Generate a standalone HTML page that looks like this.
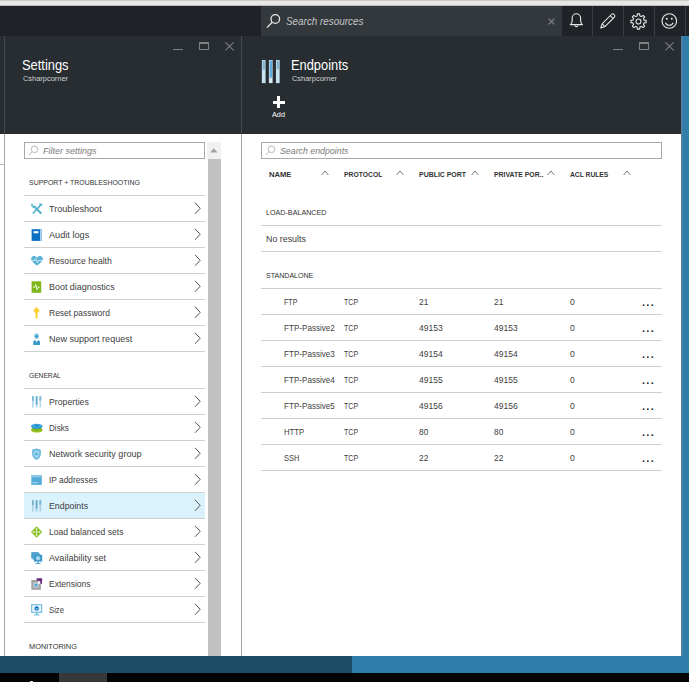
<!DOCTYPE html>
<html lang="en">
<head>
<meta charset="utf-8">
<title>Endpoints - Microsoft Azure</title>
<style>
*{box-sizing:border-box;margin:0;padding:0}
html,body{width:689px;height:682px;overflow:hidden;background:#2e7dab}
body{position:relative;font-family:"Liberation Sans",sans-serif;color:#3b3b3b;font-size:9px}
.abs,.t,svg.i{position:absolute}
.t{white-space:nowrap;line-height:1;display:block;transform-origin:0 0}
#strip{left:0;top:0;width:689px;height:6px;background:#e7e7e7;border-top:1px solid #c9c9c9;border-bottom:1px solid #bdbdbd}
#topbar{left:0;top:6px;width:689px;height:30px;background:#1f2327}
#tsearch{left:261px;top:6px;width:301px;height:30px;background:#33383c}
.tsep{top:6px;width:1px;height:30px;background:#3a3f43}
.bh{top:36px;height:98px;background:#282d31}
.bb{top:134px;height:522px;background:#fff}
.row{left:24px;width:181px;height:26px;border-top:1px solid #cfcfcf}
.row svg.c{position:absolute;left:170px;top:6px}
.row svg.i{left:6px;top:6px}
.sel{background:#daf2fc}
.ln{left:261px;width:401px;height:1px;background:#cfcfcf}
</style>
</head>
<body>

<div id="strip" class="abs"></div>
<div id="topbar" class="abs"></div>
<div id="tsearch" class="abs"></div>
<svg class="i" style="left:265px;top:12px" width="18" height="18" viewBox="0 0 18 18" fill="none" stroke="#e8e8e8" stroke-width="1.300"><circle cx="10.300" cy="7" r="4.300"/><path d="M7.200 10.200 L2 15.600"/></svg>
<span class="t" style="left:286px;top:16px;font-size:11px;transform:scaleX(0.899);color:#c4c6c7;font-style:italic;">Search resources</span>
<svg class="i" style="left:547.500px;top:18px" width="7" height="7" viewBox="0 0 7 7" stroke="#85888b" stroke-width="1.100"><path d="M.6.600L6.400 6.400M6.400.6L.6 6.400"/></svg>
<div class="abs" style="left:562px;top:6px;width:127px;height:30px;background:#1f2327"></div>
<div class="abs tsep" style="left:592px"></div><div class="abs tsep" style="left:623px"></div><div class="abs tsep" style="left:654px"></div><div class="abs tsep" style="left:685px"></div>
<svg class="i" style="left:568px;top:12px" width="17" height="18" viewBox="0 0 17 18" fill="none" stroke="#e9e9e9" stroke-width="1.100" stroke-linejoin="round"><path d="M2.300 12.600C3.900 11.600 4.200 10.600 4.200 8.500V6a4.200 4.200 0 0 1 8.400 0V8.500C12.600 10.600 12.900 11.600 14.500 12.600Z"/><path d="M6.700 13.300a1.750 1.750 0 0 0 3.400 0"/></svg>
<svg class="i" style="left:599px;top:12px" width="18" height="18" viewBox="0 0 18 18" fill="none" stroke="#e9e9e9" stroke-width="1.050" stroke-linejoin="round"><path d="M1.800 16L3.100 11.800L12.400 2.500a1.900 1.900 0 0 1 2.800 2.800L5.900 14.600Z"/><path d="M3.100 11.800L5.900 14.600M11.200 3.700L14 6.500"/></svg>
<svg class="i" style="left:629px;top:11.800px" width="19" height="19" viewBox="0 0 19 19" fill="none" stroke="#e9e9e9" stroke-width="1.050" stroke-linejoin="round"><path d="M8.12 3.970L8.360 1.880L10.640 1.880L10.880 3.970L12.440 4.610L14.080 3.310L15.690 4.920L14.390 6.560L15.030 8.120L17.120 8.360L17.120 10.640L15.030 10.880L14.390 12.440L15.690 14.080L14.080 15.690L12.440 14.390L10.880 15.030L10.640 17.120L8.360 17.120L8.120 15.030L6.560 14.390L4.920 15.690L3.310 14.080L4.610 12.440L3.970 10.880L1.880 10.640L1.880 8.360L3.970 8.120L4.610 6.560L3.310 4.920L4.920 3.310L6.560 4.610Z"/><circle cx="9.500" cy="9.500" r="2.500"/></svg>
<svg class="i" style="left:660px;top:12px" width="18" height="18" viewBox="0 0 18 18" fill="none" stroke="#e9e9e9" stroke-width="1.100"><circle cx="9.300" cy="9" r="7.300"/><path d="M5.500 10.700a4.100 4.100 0 0 0 7.600 0"/><circle cx="6.800" cy="6.800" r=".95" fill="#e9e9e9" stroke="none"/><circle cx="11.800" cy="6.800" r=".95" fill="#e9e9e9" stroke="none"/></svg>

<div class="abs" style="left:0;top:36px;width:5px;height:98px;background:#282d31;border-right:1px solid #454a4e"></div>
<div class="abs" style="left:0;top:134px;width:5px;height:522px;background:#fff;border-right:1px solid #a8a8a8"></div>
<div class="abs" style="left:0;top:164px;width:4px;height:1px;background:#b5b5b5"></div>
<div class="abs bh" style="left:5px;width:236px"></div>
<div class="abs bb" style="left:5px;width:236px"></div>
<div class="abs" style="left:241px;top:36px;width:1px;height:98px;background:#44494d"></div>
<div class="abs" style="left:241px;top:134px;width:1px;height:522px;background:#a6a6a6"></div>
<span class="t" style="left:22.3px;top:58px;font-size:14px;transform:scaleX(0.919);color:#fff;">Settings</span><span class="t" style="left:22.5px;top:75px;font-size:7.6px;transform:scaleX(0.978);color:#d2d4d5;">Csharpcorner</span><div class="abs" style="left:173px;top:49px;width:10px;height:1.200px;background:#7d8184"></div>
<div class="abs" style="left:199px;top:42px;width:10.200px;height:8.300px;border:1.100px solid #7d8184;border-top-width:2.500px"></div>
<svg class="i" style="left:225px;top:42px" width="9" height="9" viewBox="0 0 9 9" stroke="#7d8184" stroke-width="1.050"><path d="M.4.400L8.600 8.300M8.600.4L.4 8.300"/></svg>

<div class="abs bh" style="left:242px;width:439px"></div>
<div class="abs bb" style="left:242px;width:439px"></div><div class="abs" style="left:681px;top:36px;width:1.500px;height:620px;background:#4b80a0"></div>
<svg class="i" style="left:261.400px;top:59.900px" width="20" height="24" viewBox="0 0 20 24">
<g><rect x="0.85" y="0" width="3.700" height="23.100" fill="#cfe5f1"/><rect x="1.55" y=".6" width="2.300" height="8.8" fill="#7fb4d3"/><rect x="0.85" y="9.40" width="3.700" height=".7" fill="#8fb9d0"/><rect x="1.55" y="10.10" width="2.300" height="12.40" fill="#c6e3f2"/></g>
<g><rect x="7.90" y="0" width="3.700" height="23.100" fill="#cfe5f1"/><rect x="8.60" y=".6" width="2.300" height="17" fill="#5aa9d8"/><rect x="7.90" y="17.60" width="3.700" height=".7" fill="#8fb9d0"/><rect x="8.60" y="18.30" width="2.300" height="4.20" fill="#d5eaf5"/></g>
<g><rect x="14.95" y="0" width="3.700" height="23.100" fill="#cfe5f1"/><rect x="15.65" y=".6" width="2.300" height="8.3" fill="#7fb4d3"/><rect x="14.95" y="8.90" width="3.700" height=".7" fill="#8fb9d0"/><rect x="15.65" y="9.60" width="2.300" height="12.90" fill="#c6e3f2"/></g>
</svg>
<span class="t" style="left:291.3px;top:58px;font-size:14px;transform:scaleX(0.918);color:#fff;">Endpoints</span><span class="t" style="left:291.5px;top:75px;font-size:7.6px;transform:scaleX(0.978);color:#d2d4d5;">Csharpcorner</span>
<div class="abs" style="left:272.500px;top:100.500px;width:12.500px;height:3px;background:#fff"></div>
<div class="abs" style="left:277.300px;top:96px;width:3px;height:12.300px;background:#fff"></div>
<span class="t" style="left:272px;top:111.3px;font-size:8px;transform:scaleX(0.913);color:#fff;">Add</span><div class="abs" style="left:613px;top:49px;width:10px;height:1.200px;background:#7d8184"></div>
<div class="abs" style="left:639px;top:42px;width:10.200px;height:8.300px;border:1.100px solid #7d8184;border-top-width:2.500px"></div>
<svg class="i" style="left:665px;top:42px" width="9" height="9" viewBox="0 0 9 9" stroke="#7d8184" stroke-width="1.050"><path d="M.4.400L8.600 8.300M8.600.4L.4 8.300"/></svg>

<div class="abs" style="left:24px;top:142px;width:181px;height:17px;border:1px solid #a9a9a9;background:#fff"></div>
<svg class="i" style="left:28px;top:145px" width="11" height="11" viewBox="0 0 11 11" fill="none" stroke="#b9b9b9" stroke-width="1"><circle cx="6.500" cy="4.300" r="3.300"/><path d="M4.200 6.700L1 10"/></svg>
<span class="t" style="left:42.8px;top:146.3px;font-size:9.5px;transform:scaleX(0.945);color:#7a7a7a;font-style:italic;">Filter settings</span>
<div class="abs" style="left:207px;top:142px;width:14px;height:17px;background:#f1f1f1"></div>
<div class="abs" style="left:207.500px;top:159px;width:13.700px;height:497px;background:#c1c1c1"></div>
<svg class="i" style="left:210px;top:147.800px" width="8" height="5" viewBox="0 0 8 5"><path d="M0 4.500L3.800 .3L7.600 4.500Z" fill="#a3a3a3"/></svg>
<span class="t" style="left:29px;top:178.8px;font-size:8px;transform:scaleX(0.867);color:#333;">SUPPORT + TROUBLESHOOTING</span><div class="abs row" style="top:195px"><svg class="i" width="14" height="14" viewBox="0 0 14 14" fill="none" stroke="#5ab3cf" stroke-linecap="round"><path d="M4.200 4.400L10.700 11" stroke-width="2.200"/><path d="M10.800 2.900L3.400 11" stroke-width="1.700"/><path d="M2 2.200a2.300 2.300 0 0 0 3.200 2.800" stroke-width="1.500"/><path d="M9.900 2.100l1.800 .7" stroke-width="1.600"/></svg><svg class="c" width="8" height="13" viewBox="0 0 8 13" fill="none" stroke="#555" stroke-width="1"><path d="M1 .8L6.200 6.300L1 11.800"/></svg></div><span class="t" style="left:49.4px;top:204.0px;font-size:9.5px;transform:scaleX(0.956);color:#404040;">Troubleshoot</span>
<div class="abs row" style="top:221px"><svg class="i" width="14" height="14" viewBox="0 0 14 14"><rect x="1.600" y="1.200" width="10" height="11.700" fill="#0e70c5"/><rect x="10" y="1.200" width="1.700" height="11.700" fill="#a5d0f2"/><rect x="3.600" y="3.200" width="4.800" height="2.100" fill="#fff"/></svg><svg class="c" width="8" height="13" viewBox="0 0 8 13" fill="none" stroke="#555" stroke-width="1"><path d="M1 .8L6.200 6.300L1 11.800"/></svg></div><span class="t" style="left:49.4px;top:230.0px;font-size:9.5px;transform:scaleX(0.966);color:#404040;">Audit logs</span>
<div class="abs row" style="top:247px"><svg class="i" width="14" height="14" viewBox="0 0 14 14"><path d="M7 11.600C1.500 7.500 .8 5.400 1.300 3.900C2.200 1.500 5.600 1.400 7 3.700C8.400 1.400 11.800 1.500 12.700 3.900C13.200 5.400 12.500 7.500 7 11.600Z" fill="#5ab3d6"/><path d="M2 6.500h2.800l1-2 1.600 4.300 1-2.300h3.400" stroke="#e8f5fb" stroke-width=".8" fill="none"/></svg><svg class="c" width="8" height="13" viewBox="0 0 8 13" fill="none" stroke="#555" stroke-width="1"><path d="M1 .8L6.200 6.300L1 11.800"/></svg></div><span class="t" style="left:49.4px;top:256.0px;font-size:9.5px;transform:scaleX(0.908);color:#404040;">Resource health</span>
<div class="abs row" style="top:273px"><svg class="i" width="14" height="14" viewBox="0 0 14 14"><rect x="1.600" y="1.300" width="9.600" height="11.500" fill="#7db51a"/><path d="M3 7.200h1.800l1-2.600 1.300 5 1-2.400h1.700" stroke="#fff" stroke-width=".9" fill="none"/></svg><svg class="c" width="8" height="13" viewBox="0 0 8 13" fill="none" stroke="#555" stroke-width="1"><path d="M1 .8L6.200 6.300L1 11.800"/></svg></div><span class="t" style="left:49.4px;top:282.0px;font-size:9.5px;transform:scaleX(0.941);color:#404040;">Boot diagnostics</span>
<div class="abs row" style="top:299px"><svg class="i" width="14" height="14" viewBox="0 0 14 14"><path d="M6.500 1L9.800 4.500L7.500 7v5l-1 .8l-1-.8V7L3.200 4.500Z" fill="#fbd02c"/></svg><svg class="c" width="8" height="13" viewBox="0 0 8 13" fill="none" stroke="#555" stroke-width="1"><path d="M1 .8L6.200 6.300L1 11.800"/></svg></div><span class="t" style="left:49.4px;top:308.0px;font-size:9.5px;transform:scaleX(0.894);color:#404040;">Reset password</span>
<div class="abs row" style="top:325px"><svg class="i" width="14" height="14" viewBox="0 0 14 14"><path d="M3.200 13V9.200l2.300-1.200h2.200l2.300 1.200V13Z" fill="#3d9bc9"/><rect x="4.200" y="1.200" width="4.800" height="5.800" rx="2.200" fill="#8fd0ea"/><circle cx="6.600" cy="4.300" r="1.400" fill="#3d9bc9"/><path d="M5.200 8l1.400 2.200L8 8Z" fill="#fff"/></svg><svg class="c" width="8" height="13" viewBox="0 0 8 13" fill="none" stroke="#555" stroke-width="1"><path d="M1 .8L6.200 6.300L1 11.800"/></svg></div><span class="t" style="left:49.4px;top:334.0px;font-size:9.5px;transform:scaleX(0.949);color:#404040;">New support request</span>
<div class="abs row" style="top:351px;height:1px"></div>
<span class="t" style="left:29px;top:371.8px;font-size:8px;transform:scaleX(0.832);color:#333;">GENERAL</span><div class="abs row" style="top:388px"><svg class="i" width="14" height="14" viewBox="0 0 14 14"><rect x="2" y="1.200" width="1.800" height="11.400" fill="#b9dbec"/><rect x="2" y="1.200" width="1.800" height="5" fill="#79b9db"/><rect x="5.700" y="1.200" width="1.800" height="11.400" fill="#b9dbec"/><rect x="5.700" y="1.200" width="1.800" height="8.500" fill="#66afd7"/><rect x="9.400" y="1.200" width="1.800" height="11.400" fill="#b9dbec"/><rect x="9.400" y="1.200" width="1.800" height="4.500" fill="#79b9db"/></svg><svg class="c" width="8" height="13" viewBox="0 0 8 13" fill="none" stroke="#555" stroke-width="1"><path d="M1 .8L6.200 6.300L1 11.800"/></svg></div><span class="t" style="left:49.4px;top:397.0px;font-size:9.5px;transform:scaleX(0.919);color:#404040;">Properties</span>
<div class="abs row" style="top:414px"><svg class="i" width="14" height="14" viewBox="0 0 14 14"><ellipse cx="6.800" cy="9.200" rx="5.600" ry="2.400" fill="#a5c626"/><ellipse cx="6.800" cy="8.500" rx="5.600" ry="2.100" fill="#86b81b"/><ellipse cx="6.800" cy="5.600" rx="5.600" ry="2.500" fill="#2c8fcf"/><ellipse cx="6.800" cy="4.900" rx="5.600" ry="2.100" fill="#3aa8df"/><ellipse cx="6.800" cy="4.700" rx="1.600" ry=".6" fill="#1d6fa8"/></svg><svg class="c" width="8" height="13" viewBox="0 0 8 13" fill="none" stroke="#555" stroke-width="1"><path d="M1 .8L6.200 6.300L1 11.800"/></svg></div><span class="t" style="left:49.4px;top:423.0px;font-size:9.5px;transform:scaleX(0.856);color:#404040;">Disks</span>
<div class="abs row" style="top:440px"><svg class="i" width="14" height="14" viewBox="0 0 14 14"><path d="M6.500 1.600L10.800 2.800V7.300C10.800 9.900 8.700 11.900 6.500 13C4.300 11.900 2.200 9.900 2.200 7.300V2.800Z" fill="#5fb3dc"/><path d="M6.500 3.100L9.500 4V7.200C9.500 9.100 8 10.500 6.500 11.400C5 10.500 3.500 9.100 3.500 7.200V4Z" fill="#9fd3ec"/><circle cx="6.500" cy="7" r="1.500" fill="#5fb3dc"/></svg><svg class="c" width="8" height="13" viewBox="0 0 8 13" fill="none" stroke="#555" stroke-width="1"><path d="M1 .8L6.200 6.300L1 11.800"/></svg></div><span class="t" style="left:49.4px;top:449.0px;font-size:9.5px;transform:scaleX(0.952);color:#404040;">Network security group</span>
<div class="abs row" style="top:466px"><svg class="i" width="14" height="14" viewBox="0 0 14 14"><rect x="1.300" y="2.200" width="10.500" height="9.700" fill="#55acd8"/><rect x="1.300" y="2.200" width="10.500" height="2" fill="#8fcbe8"/><rect x="2.600" y="9.100" width="1.100" height="1.100" fill="#d9eef8"/><rect x="4.600" y="9.100" width="1.100" height="1.100" fill="#d9eef8"/><rect x="6.600" y="9.100" width="1.100" height="1.100" fill="#d9eef8"/></svg><svg class="c" width="8" height="13" viewBox="0 0 8 13" fill="none" stroke="#555" stroke-width="1"><path d="M1 .8L6.200 6.300L1 11.800"/></svg></div><span class="t" style="left:49.4px;top:475.0px;font-size:9.5px;transform:scaleX(0.877);color:#404040;">IP addresses</span>
<div class="abs row sel" style="top:492px"><svg class="i" width="14" height="14" viewBox="0 0 14 14"><rect x="2" y="1.200" width="1.800" height="11.400" fill="#b0d3e4"/><rect x="2" y="1.200" width="1.800" height="5" fill="#79b3d3"/><rect x="5.700" y="1.200" width="1.800" height="11.400" fill="#b0d3e4"/><rect x="5.700" y="1.200" width="1.800" height="8.500" fill="#6aa9cf"/><rect x="9.400" y="1.200" width="1.800" height="11.400" fill="#b0d3e4"/><rect x="9.400" y="1.200" width="1.800" height="4.500" fill="#79b3d3"/></svg><svg class="c" width="8" height="13" viewBox="0 0 8 13" fill="none" stroke="#555" stroke-width="1"><path d="M1 .8L6.200 6.300L1 11.800"/></svg></div><span class="t" style="left:49.4px;top:501.0px;font-size:9.5px;transform:scaleX(0.925);color:#404040;">Endpoints</span>
<div class="abs row" style="top:518px"><svg class="i" width="14" height="14" viewBox="0 0 14 14"><path d="M6.600 1.200L12.200 7L6.600 12.800L1 7Z" fill="#80bb1e"/><path d="M6.600 3.200v7.600M2.900 7h7.400" stroke="#d8ebb0" stroke-width="1.100"/><path d="M6.600 2.600l1.500 1.700h-3ZM6.600 11.400l1.500-1.700h-3ZM2.300 7l1.700-1.500v3ZM10.900 7l-1.700-1.500v3Z" fill="#d8ebb0"/></svg><svg class="c" width="8" height="13" viewBox="0 0 8 13" fill="none" stroke="#555" stroke-width="1"><path d="M1 .8L6.200 6.300L1 11.800"/></svg></div><span class="t" style="left:49.4px;top:527.0px;font-size:9.5px;transform:scaleX(0.904);color:#404040;">Load balanced sets</span>
<div class="abs row" style="top:544px"><svg class="i" width="14" height="14" viewBox="0 0 14 14"><rect x="1.300" y="1.200" width="7.500" height="6.200" fill="#3f98c8"/><rect x="2.600" y="2.500" width="7.500" height="6.200" fill="#5bacd6"/><rect x="3.900" y="3.800" width="8.300" height="6.800" fill="#3f98c8"/><circle cx="8" cy="7.200" r="2.100" fill="#a5d8f0"/><rect x="7.200" y="10.600" width="1.700" height="1.400" fill="#5bacd6"/><rect x="5.500" y="12" width="5" height="1" fill="#5bacd6"/></svg><svg class="c" width="8" height="13" viewBox="0 0 8 13" fill="none" stroke="#555" stroke-width="1"><path d="M1 .8L6.200 6.300L1 11.800"/></svg></div><span class="t" style="left:49.4px;top:553.0px;font-size:9.5px;transform:scaleX(0.950);color:#404040;">Availability set</span>
<div class="abs row" style="top:570px"><svg class="i" width="14" height="14" viewBox="0 0 14 14"><rect x="1.300" y="3" width="9.600" height="9.800" fill="#a3a3a6"/><rect x="3.600" y="5.500" width="5" height="5" fill="#dcdcdc"/><rect x="4.600" y="6.600" width="3" height="3" fill="#4fa7d2"/><path d="M6.600 1.200h5.500v5.600h-2.400V3.700H6.600Z" fill="#6a2a7c"/><rect x="8" y="4.400" width="2.300" height="2.300" fill="#fff"/></svg><svg class="c" width="8" height="13" viewBox="0 0 8 13" fill="none" stroke="#555" stroke-width="1"><path d="M1 .8L6.200 6.300L1 11.800"/></svg></div><span class="t" style="left:49.4px;top:579.0px;font-size:9.5px;transform:scaleX(0.893);color:#404040;">Extensions</span>
<div class="abs row" style="top:596px"><svg class="i" width="14" height="14" viewBox="0 0 14 14"><rect x="1.700" y="1.700" width="10" height="7.600" fill="#e8f5fc" stroke="#61b5dc" stroke-width="1"/><circle cx="6.700" cy="5.400" r="2.200" fill="#0d6fc4"/><path d="M5.300 5.200h2.800l-1.400 1.600Z" fill="#bfe3f5"/><rect x="6" y="9.800" width="1.500" height="1.600" fill="#61b5dc"/><rect x="4" y="11.400" width="5.500" height="1" fill="#61b5dc"/></svg><svg class="c" width="8" height="13" viewBox="0 0 8 13" fill="none" stroke="#555" stroke-width="1"><path d="M1 .8L6.200 6.300L1 11.800"/></svg></div><span class="t" style="left:49.4px;top:605.0px;font-size:9.5px;transform:scaleX(0.811);color:#404040;">Size</span>
<div class="abs row" style="top:622px;height:1px"></div>
<span class="t" style="left:29px;top:642.8px;font-size:8px;transform:scaleX(0.924);color:#333;">MONITORING</span>
<div class="abs" style="left:261px;top:142px;width:401px;height:17px;border:1px solid #a9a9a9;background:#fff"></div>
<svg class="i" style="left:265px;top:145px" width="11" height="11" viewBox="0 0 11 11" fill="none" stroke="#b9b9b9" stroke-width="1"><circle cx="6.500" cy="4.300" r="3.300"/><path d="M4.200 6.700L1 10"/></svg>
<span class="t" style="left:280px;top:146.3px;font-size:9.5px;transform:scaleX(0.926);color:#7a7a7a;font-style:italic;">Search endpoints</span><span class="t" style="left:268.5px;top:170.6px;font-size:8px;transform:scaleX(0.951);color:#333;font-weight:bold;">NAME</span><svg class="i" style="left:321px;top:170px" width="8" height="6" viewBox="0 0 8 6" fill="none" stroke="#6a6a6a" stroke-width=".9"><path d="M.6 5L4 1L7.400 5"/></svg>
<span class="t" style="left:343.6px;top:170.6px;font-size:8px;transform:scaleX(0.848);color:#333;font-weight:bold;">PROTOCOL</span><svg class="i" style="left:395.7px;top:170px" width="8" height="6" viewBox="0 0 8 6" fill="none" stroke="#6a6a6a" stroke-width=".9"><path d="M.6 5L4 1L7.400 5"/></svg>
<span class="t" style="left:418.6px;top:170.6px;font-size:8px;transform:scaleX(0.867);color:#333;font-weight:bold;">PUBLIC PORT</span><svg class="i" style="left:471.1px;top:170px" width="8" height="6" viewBox="0 0 8 6" fill="none" stroke="#6a6a6a" stroke-width=".9"><path d="M.6 5L4 1L7.400 5"/></svg>
<span class="t" style="left:493.8px;top:170.6px;font-size:8px;transform:scaleX(0.861);color:#333;font-weight:bold;">PRIVATE POR..</span><svg class="i" style="left:547.4px;top:170px" width="8" height="6" viewBox="0 0 8 6" fill="none" stroke="#6a6a6a" stroke-width=".9"><path d="M.6 5L4 1L7.400 5"/></svg>
<span class="t" style="left:569.5px;top:170.6px;font-size:8px;transform:scaleX(0.839);color:#333;font-weight:bold;">ACL RULES</span><svg class="i" style="left:623px;top:170px" width="8" height="6" viewBox="0 0 8 6" fill="none" stroke="#6a6a6a" stroke-width=".9"><path d="M.6 5L4 1L7.400 5"/></svg>
<span class="t" style="left:266.3px;top:208.8px;font-size:8px;transform:scaleX(0.894);color:#333;">LOAD-BALANCED</span><div class="abs ln" style="top:225px"></div>
<span class="t" style="left:266.3px;top:234.0px;font-size:9.5px;transform:scaleX(0.933);color:#404040;">No results</span><div class="abs ln" style="top:251px"></div>
<span class="t" style="left:266.3px;top:271.8px;font-size:8px;transform:scaleX(0.882);color:#333;">STANDALONE</span><div class="abs ln" style="top:288px"></div><span class="t" style="left:283.8px;top:297.0px;font-size:9.5px;transform:scaleX(0.746);color:#404040;">FTP</span><span class="t" style="left:344px;top:297.0px;font-size:9.5px;transform:scaleX(0.742);color:#404040;">TCP</span><span class="t" style="left:418.5px;top:297.0px;font-size:9.5px;transform:scaleX(0.879);color:#404040;">21</span><span class="t" style="left:493.8px;top:297.0px;font-size:9.5px;transform:scaleX(0.879);color:#404040;">21</span><span class="t" style="left:569.5px;top:297.0px;font-size:9.5px;transform:scaleX(0.906);color:#404040;">0</span><span class="t" style="left:641.9px;top:297.2px;font-size:11px;color:#2a2a2a;font-weight:bold;letter-spacing:1.400px;">...</span>
<div class="abs ln" style="top:314px"></div><span class="t" style="left:283.8px;top:323.0px;font-size:9.5px;transform:scaleX(0.852);color:#404040;">FTP-Passive2</span><span class="t" style="left:344px;top:323.0px;font-size:9.5px;transform:scaleX(0.742);color:#404040;">TCP</span><span class="t" style="left:418.5px;top:323.0px;font-size:9.5px;transform:scaleX(0.897);color:#404040;">49153</span><span class="t" style="left:493.8px;top:323.0px;font-size:9.5px;transform:scaleX(0.897);color:#404040;">49153</span><span class="t" style="left:569.5px;top:323.0px;font-size:9.5px;transform:scaleX(0.906);color:#404040;">0</span><span class="t" style="left:641.9px;top:323.2px;font-size:11px;color:#2a2a2a;font-weight:bold;letter-spacing:1.400px;">...</span>
<div class="abs ln" style="top:340px"></div><span class="t" style="left:283.8px;top:349.0px;font-size:9.5px;transform:scaleX(0.852);color:#404040;">FTP-Passive3</span><span class="t" style="left:344px;top:349.0px;font-size:9.5px;transform:scaleX(0.742);color:#404040;">TCP</span><span class="t" style="left:418.5px;top:349.0px;font-size:9.5px;transform:scaleX(0.897);color:#404040;">49154</span><span class="t" style="left:493.8px;top:349.0px;font-size:9.5px;transform:scaleX(0.897);color:#404040;">49154</span><span class="t" style="left:569.5px;top:349.0px;font-size:9.5px;transform:scaleX(0.906);color:#404040;">0</span><span class="t" style="left:641.9px;top:349.2px;font-size:11px;color:#2a2a2a;font-weight:bold;letter-spacing:1.400px;">...</span>
<div class="abs ln" style="top:366px"></div><span class="t" style="left:283.8px;top:375.0px;font-size:9.5px;transform:scaleX(0.852);color:#404040;">FTP-Passive4</span><span class="t" style="left:344px;top:375.0px;font-size:9.5px;transform:scaleX(0.742);color:#404040;">TCP</span><span class="t" style="left:418.5px;top:375.0px;font-size:9.5px;transform:scaleX(0.897);color:#404040;">49155</span><span class="t" style="left:493.8px;top:375.0px;font-size:9.5px;transform:scaleX(0.897);color:#404040;">49155</span><span class="t" style="left:569.5px;top:375.0px;font-size:9.5px;transform:scaleX(0.906);color:#404040;">0</span><span class="t" style="left:641.9px;top:375.2px;font-size:11px;color:#2a2a2a;font-weight:bold;letter-spacing:1.400px;">...</span>
<div class="abs ln" style="top:392px"></div><span class="t" style="left:283.8px;top:401.0px;font-size:9.5px;transform:scaleX(0.852);color:#404040;">FTP-Passive5</span><span class="t" style="left:344px;top:401.0px;font-size:9.5px;transform:scaleX(0.742);color:#404040;">TCP</span><span class="t" style="left:418.5px;top:401.0px;font-size:9.5px;transform:scaleX(0.897);color:#404040;">49156</span><span class="t" style="left:493.8px;top:401.0px;font-size:9.5px;transform:scaleX(0.897);color:#404040;">49156</span><span class="t" style="left:569.5px;top:401.0px;font-size:9.5px;transform:scaleX(0.906);color:#404040;">0</span><span class="t" style="left:641.9px;top:401.2px;font-size:11px;color:#2a2a2a;font-weight:bold;letter-spacing:1.400px;">...</span>
<div class="abs ln" style="top:418px"></div><span class="t" style="left:283.8px;top:427.0px;font-size:9.5px;transform:scaleX(0.818);color:#404040;">HTTP</span><span class="t" style="left:344px;top:427.0px;font-size:9.5px;transform:scaleX(0.742);color:#404040;">TCP</span><span class="t" style="left:418.5px;top:427.0px;font-size:9.5px;transform:scaleX(0.879);color:#404040;">80</span><span class="t" style="left:493.8px;top:427.0px;font-size:9.5px;transform:scaleX(0.879);color:#404040;">80</span><span class="t" style="left:569.5px;top:427.0px;font-size:9.5px;transform:scaleX(0.906);color:#404040;">0</span><span class="t" style="left:641.9px;top:427.2px;font-size:11px;color:#2a2a2a;font-weight:bold;letter-spacing:1.400px;">...</span>
<div class="abs ln" style="top:444px"></div><span class="t" style="left:283.8px;top:453.0px;font-size:9.5px;transform:scaleX(0.788);color:#404040;">SSH</span><span class="t" style="left:344px;top:453.0px;font-size:9.5px;transform:scaleX(0.742);color:#404040;">TCP</span><span class="t" style="left:418.5px;top:453.0px;font-size:9.5px;transform:scaleX(0.879);color:#404040;">22</span><span class="t" style="left:493.8px;top:453.0px;font-size:9.5px;transform:scaleX(0.879);color:#404040;">22</span><span class="t" style="left:569.5px;top:453.0px;font-size:9.5px;transform:scaleX(0.906);color:#404040;">0</span><span class="t" style="left:641.9px;top:453.2px;font-size:11px;color:#2a2a2a;font-weight:bold;letter-spacing:1.400px;">...</span>
<div class="abs ln" style="top:470px"></div>

<div class="abs" style="left:0;top:656px;width:352px;height:17px;background:#1c4c66"></div>
<div class="abs" style="left:352px;top:656px;width:337px;height:17px;background:#2e7dab"></div>
<div class="abs" style="left:0;top:673px;width:689px;height:9px;background:#040406"></div>
<div class="abs" style="left:59px;top:673px;width:48px;height:9px;background:#38383a"></div>
<div class="abs" style="left:30px;top:680.500px;width:3px;height:1.500px;background:#d8d8d8"></div>

</body>
</html>
